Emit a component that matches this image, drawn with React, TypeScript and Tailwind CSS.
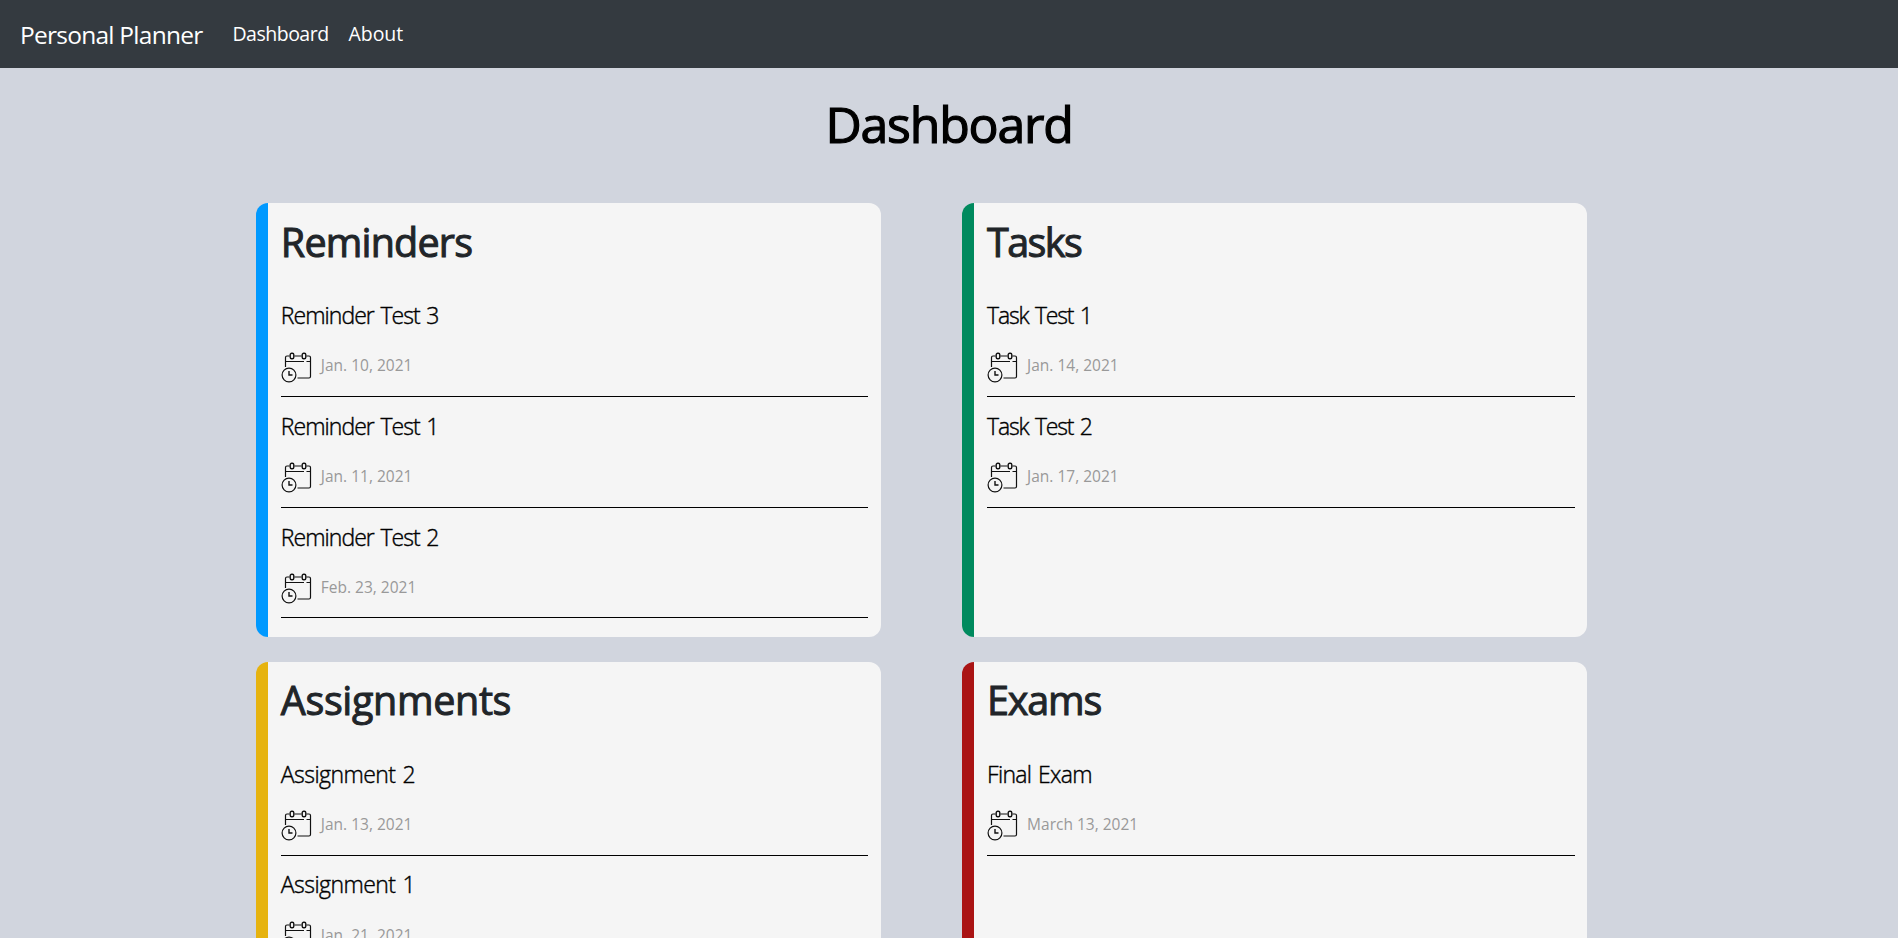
import React from "react";

type Entry = { title: string; date: string };
type Panel = { name: string; border: string; nameTracking: string; titleTracking: string; entries: Entry[] };

const panels: Panel[] = [
  {
    name: "Reminders",
    border: "border-[#0099ff]",
    nameTracking: "tracking-[-0.8px]",
    titleTracking: "tracking-[-0.95px]",
    entries: [
      { title: "Reminder Test 3", date: "Jan. 10, 2021" },
      { title: "Reminder Test 1", date: "Jan. 11, 2021" },
      { title: "Reminder Test 2", date: "Feb. 23, 2021" },
    ],
  },
  {
    name: "Tasks",
    border: "border-[#008a5e]",
    nameTracking: "tracking-[-1.6px]",
    titleTracking: "tracking-[-1.15px]",
    entries: [
      { title: "Task Test 1", date: "Jan. 14, 2021" },
      { title: "Task Test 2", date: "Jan. 17, 2021" },
    ],
  },
  {
    name: "Assignments",
    border: "border-[#e6b30f]",
    nameTracking: "tracking-[-0.35px]",
    titleTracking: "tracking-[-0.55px]",
    entries: [
      { title: "Assignment 2", date: "Jan. 13, 2021" },
      { title: "Assignment 1", date: "Jan. 21, 2021" },
    ],
  },
  {
    name: "Exams",
    border: "border-[#aa1414]",
    nameTracking: "tracking-[-1.2px]",
    titleTracking: "tracking-[-0.7px]",
    entries: [{ title: "Final Exam", date: "March 13, 2021" }],
  },
];

function CalendarClock() {
  return (
    <svg width="32" height="32" viewBox="0 0 32 32" fill="none" stroke="#111" strokeWidth="1.2">
      <path d="M4.5 15V5.5Q4.5 4 6 4H8.6M13.4 4H20.6M25.4 4H28Q29.5 4 29.5 5.5V24.5Q29.5 26 28 26H16.5" />
      <path d="M4.5 9.5H23M25.5 9.5H29" />
      <rect x="9.2" y="1.2" width="3.6" height="5.6" rx="1.5" strokeWidth="1.4" />
      <rect x="21.2" y="1.2" width="3.6" height="5.6" rx="1.5" strokeWidth="1.4" />
      <circle cx="8" cy="23" r="6.9" />
      <path d="M8 19V23H11.5" strokeWidth="1.4" />
    </svg>
  );
}

function Card({ panel }: { panel: Panel }) {
  return (
    <section className={`h-[433.6px] overflow-hidden rounded-xl border-l-[12px] bg-[#f5f5f5] pr-[12.6px] pl-[13px] ${panel.border}`}>
      <h2 className={`h-[83.3px] pt-[14.4px] text-[39.5px] leading-[48px] font-normal text-[#212529] [-webkit-text-stroke:1px_#212529] ${panel.nameTracking}`}>{panel.name}</h2>
      {panel.entries.map((e) => (
        <div key={e.title} className="h-[110.6px] border-b border-black">
          <h3 className={`h-[47px] pt-[10.8px] text-[23px] leading-[36px] font-light text-black [word-spacing:1.5px] [-webkit-text-stroke:0.4px_black] ${panel.titleTracking}`}>{e.title}</h3>
          <div className="flex items-start gap-2 pt-[18.2px]">
            <CalendarClock />
            <span className="pt-[1.7px] text-[15.5px] leading-6 text-[#999]">{e.date}</span>
          </div>
        </div>
      ))}
    </section>
  );
}

export default function App() {
  return (
    <div className="h-[938px] overflow-hidden bg-[#d1d5de] font-['Open_Sans',sans-serif]">
      <nav className="flex h-[68px] items-center bg-[#343a40] pl-5 text-white">
        <span className="pt-[2px] text-[24.5px] tracking-[-0.75px]">Personal Planner</span>
        <span className="ml-[30px] text-[19.5px] tracking-[-0.5px]">Dashboard</span>
        <span className="ml-5 text-[19.5px] tracking-[-0.1px]">About</span>
      </nav>
      <h1 className="h-[135.3px] pt-[26px] text-center text-[50px] leading-[60px] font-normal tracking-[-1.2px] text-black [-webkit-text-stroke:1.2px_black]">Dashboard</h1>
      <main className="grid grid-cols-[625.2px_625.2px] gap-x-[81.1px] gap-y-[24.9px] pl-[255.8px]">
        {panels.map((p) => (
          <Card key={p.name} panel={p} />
        ))}
      </main>
    </div>
  );
}
